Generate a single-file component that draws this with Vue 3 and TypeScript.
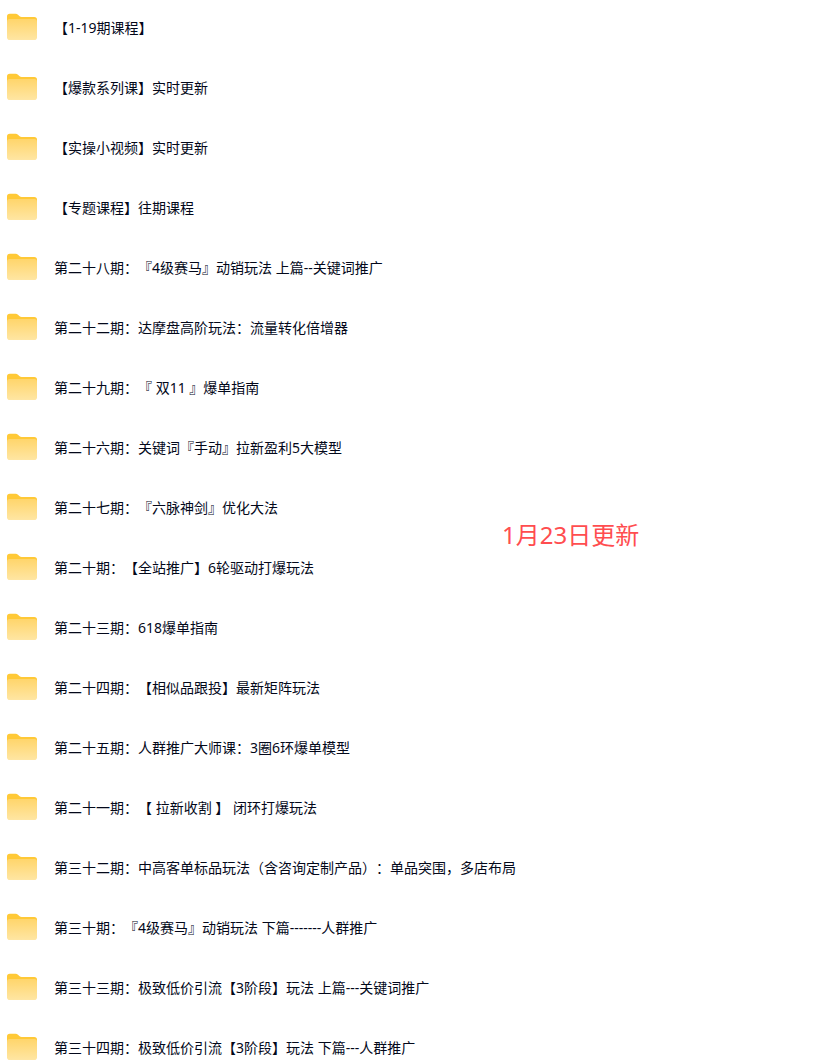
<script setup lang="ts">
interface Folder {
  id: number
  name: string
}

const names: string[] = [
  '【1-19期课程】',
  '【爆款系列课】实时更新',
  '【实操小视频】实时更新',
  '【专题课程】往期课程',
  '第二十八期：『4级赛马』动销玩法 上篇--关键词推广',
  '第二十二期：达摩盘高阶玩法：流量转化倍增器',
  '第二十九期：『 双11 』爆单指南',
  '第二十六期：关键词『手动』拉新盈利5大模型',
  '第二十七期：『六脉神剑』优化大法',
  '第二十期：【全站推广】6轮驱动打爆玩法',
  '第二十三期：618爆单指南',
  '第二十四期：【相似品跟投】最新矩阵玩法',
  '第二十五期：人群推广大师课：3圈6环爆单模型',
  '第二十一期：【 拉新收割 】 闭环打爆玩法',
  '第三十二期：中高客单标品玩法（含咨询定制产品）：单品突围，多店布局',
  '第三十期：『4级赛马』动销玩法 下篇-------人群推广',
  '第三十三期：极致低价引流【3阶段】玩法 上篇---关键词推广',
  '第三十四期：极致低价引流【3阶段】玩法 下篇---人群推广',
]

const folders: Folder[] = names.map((name, index) => ({ id: index + 1, name }))
</script>

<template>
  <main class="page" lang="zh-CN">
    <svg class="defs" width="0" height="0" aria-hidden="true">
      <defs>
        <linearGradient id="folder-front" x1="0" y1="0" x2="0" y2="1">
          <stop offset="0" stop-color="#ffd56b" />
          <stop offset="1" stop-color="#ffe6a3" />
        </linearGradient>
      </defs>
    </svg>
    <ul class="list">
      <li v-for="folder in folders" :key="folder.id">
        <a class="row" :href="`#folder-${folder.id}`">
          <svg class="icon" viewBox="0 0 30 30" aria-hidden="true">
            <path
              d="M0 3.6Q0 .8 2.8 .8H8.6Q10 .8 11 1.7L12.6 3.2Q13.4 4 14.6 4H27.2Q30 4 30 6.8V16H0Z"
              fill="#ffc937"
            />
            <path
              d="M0 8.8Q0 6 2.8 6H27.2Q30 6 30 8.8V24.2Q30 27 27.2 27H2.8Q0 27 0 24.2Z"
              fill="url(#folder-front)"
            />
          </svg>
          <span class="name">{{ folder.name }}</span>
        </a>
      </li>
    </ul>
    <p class="notice">1月23日更新</p>
  </main>
</template>

<style>
body {
  background: #fff;
}
</style>

<style scoped>
.page {
  position: relative;
  height: 100vh;
  overflow: hidden;
  font-family: "Noto Sans", "Noto Sans CJK SC", sans-serif;
  font-weight: 400;
  text-spacing-trim: space-all;
}

.defs {
  position: absolute;
}

.list {
  margin: 0;
  padding: 0;
  list-style: none;
}

.row {
  display: flex;
  align-items: center;
  gap: 17px;
  box-sizing: border-box;
  height: 60px;
  padding: 0 7px 4px;
  color: #03081a;
  text-decoration: none;
}

.icon {
  flex: none;
  width: 30px;
  height: 30px;
}

.name {
  font-size: 14px;
  line-height: 20px;
  white-space: nowrap;
}

.notice {
  position: absolute;
  top: 518px;
  left: 502px;
  margin: 0;
  color: #ff4d4f;
  font-size: 24px;
  line-height: 34px;
  white-space: nowrap;
}
</style>
